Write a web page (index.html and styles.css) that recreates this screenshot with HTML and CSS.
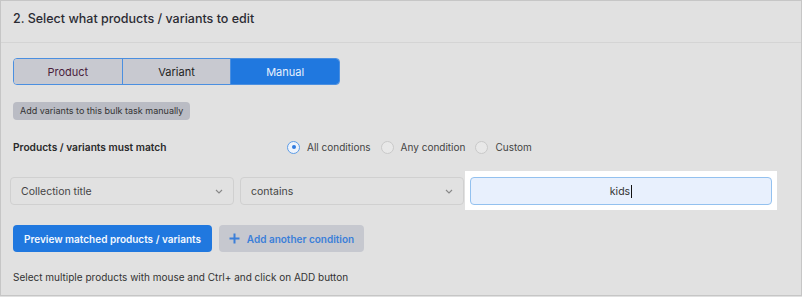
FILE: index.html
```html
<!DOCTYPE html>
<html>
<head>
<meta charset="utf-8">
<link rel="stylesheet" href="styles.css">
</head>
<body>
<div class="panel">
  <div class="panel-head">2. Select what products / variants to edit</div>
  <div class="panel-body">
    <div class="seg">
      <div class="seg-btn seg-product">Product</div>
      <div class="seg-btn">Variant</div>
      <div class="seg-btn seg-active">Manual</div>
    </div>
    <div class="badge">Add variants to this bulk task manually</div>
    <div class="match-row">
      <div class="match-label">Products / variants must match</div>
      <div class="radios">
        <label class="radio"><span class="dot dot-on"></span>All conditions</label>
        <label class="radio"><span class="dot"></span>Any condition</label>
        <label class="radio"><span class="dot"></span>Custom</label>
      </div>
    </div>
    <div class="cond-row">
      <div class="select">Collection title<svg class="chev" width="8" height="5" viewBox="0 0 8 5"><path d="M1 1l3 3 3-3" fill="none" stroke="#888" stroke-width="1.1"/></svg></div>
      <div class="select">contains<svg class="chev" width="8" height="5" viewBox="0 0 8 5"><path d="M1 1l3 3 3-3" fill="none" stroke="#888" stroke-width="1.1"/></svg></div>
      <div class="value-wrap"><div class="value">kids<span class="caret"></span></div></div>
    </div>
    <div class="btn-row">
      <div class="btn btn-primary">Preview matched products / variants</div>
      <div class="btn btn-secondary"><svg width="11" height="11" viewBox="0 0 11 11"><path d="M5.5 0.5v10M0.5 5.5h10" stroke="#3b7fd9" stroke-width="2"/></svg>Add another condition</div>
    </div>
    <div class="hint">Select multiple products with mouse and Ctrl+ and click on ADD button</div>
  </div>
</div>
</body>
</html>
```
FILE: styles.css
```css
html, body {
  margin: 0;
  padding: 0;
  background: #e0e0e0;
}
body {
  font-family: "Inter", "Noto Sans", sans-serif;
  color: #333;
}
.panel {
  width: 802px;
  height: 296px;
  box-sizing: border-box;
  border: 1px solid #c6c6c6;
  background: #e1e1e1;
}
.panel-head {
  height: 42px;
  box-sizing: border-box;
  border-bottom: 1px solid #d4d4d4;
  padding: 10px 12px 0;
  font-size: 12.5px;
  line-height: 16px;
  color: #2b2b33;
  font-weight: 500;
}
.panel-body {
  padding: 15px 12px 0;
}
.seg {
  display: flex;
  width: 327px;
  height: 27px;
  box-sizing: border-box;
  border: 1px solid #4b8fe0;
  border-radius: 4px;
  overflow: hidden;
}
.seg-btn {
  flex: 1;
  display: flex;
  align-items: center;
  justify-content: center;
  background: #c8c9d0;
  font-size: 11px;
  font-weight: 400;
  color: #222;
}
.seg-btn + .seg-btn {
  border-left: 1px solid #4b8fe0;
}
.seg-product { color: #4a1d3c; }
.seg-active {
  background: #2078df;
  color: #e9f1fd;
}
.badge {
  display: inline-block;
  margin-top: 17px;
  height: 18px;
  line-height: 18px;
  padding: 0 7px;
  border-radius: 4px;
  background: #babcc4;
  font-size: 9px;
  color: #333;
}
.match-row {
  display: flex;
  align-items: center;
  margin-top: 18px;
  height: 18px;
}
.match-label {
  width: 274px;
  font-size: 10.2px;
  font-weight: 600;
  color: #2a2a2a;
}
.radios {
  display: flex;
  gap: 10px;
}
.radio {
  display: flex;
  align-items: center;
  gap: 7px;
  font-size: 10px;
  color: #444;
}
.dot {
  width: 13px;
  height: 13px;
  box-sizing: border-box;
  border-radius: 50%;
  border: 1px solid #c9c9c9;
  background: #e8e8e8;
  position: relative;
}
.dot-on {
  border-color: #5d9ce6;
  background: #eef3fb;
}
.dot-on::after {
  content: "";
  position: absolute;
  left: 3.5px;
  top: 3.5px;
  width: 4px;
  height: 4px;
  border-radius: 50%;
  background: #2f7be0;
}
.cond-row {
  display: flex;
  gap: 6px;
  margin-top: 21px;
  margin-left: -3px;
}
.select {
  width: 224px;
  height: 28px;
  box-sizing: border-box;
  border: 1px solid #d0d0d0;
  border-radius: 4px;
  display: flex;
  align-items: center;
  justify-content: space-between;
  padding: 0 10px 0 10px;
  font-size: 10.5px;
  color: #444;
}
.value-wrap {
  background: #fff;
  padding: 6px 5px 5px;
  margin: -6px 0 -5px -5px;
}
.value {
  width: 302px;
  height: 28px;
  box-sizing: border-box;
  border: 1px solid #93c1ef;
  border-radius: 4px;
  background: #e8f0fd;
  display: flex;
  align-items: center;
  justify-content: center;
  font-size: 10.5px;
  color: #333;
}
.caret {
  width: 1px;
  height: 13px;
  background: #111;
  margin-left: 1px;
}
.btn-row {
  display: flex;
  gap: 7px;
  margin-top: 20px;
}
.btn {
  height: 27px;
  box-sizing: border-box;
  border-radius: 4px;
  display: flex;
  align-items: center;
  justify-content: center;
  font-size: 10px;
  font-weight: 600;
}
.btn-primary {
  width: 199px;
  background: #2078df;
  color: #f4f8fe;
}
.btn-secondary {
  width: 145px;
  background: #c6c8cf;
  color: #3b7fd9;
  gap: 7px;
}
.hint {
  margin-top: 19px;
  font-size: 10px;
  color: #333;
}
```
